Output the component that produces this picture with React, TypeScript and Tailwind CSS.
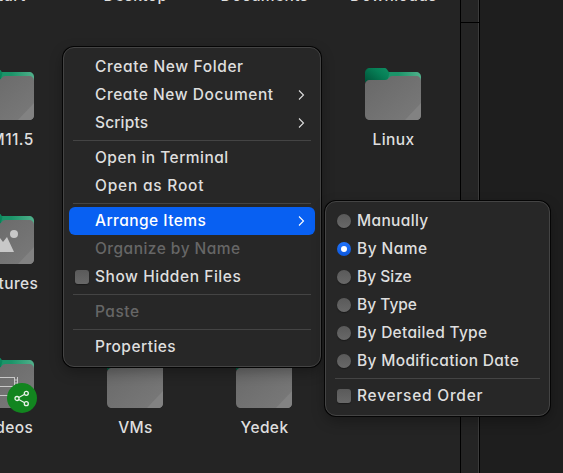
import { ReactNode } from 'react';

type FolderProps = {
  name: string;
  place: string;
  tracking?: string;
  shared?: boolean;
  children?: ReactNode;
};

function Folder({ name, place, tracking = 'tracking-[0.4px]', shared, children }: FolderProps) {
  return (
    <div className={`flex flex-col items-center ${place}`}>
      <div className="relative">
        <svg width="56" height="52" viewBox="0 0 56 52" className="block">
          <defs>
            <linearGradient id="tab" x1="0" y1="1" x2="1" y2="0.300">
              <stop offset="0" stopColor="#005238" />
              <stop offset="0.7" stopColor="#067f56" />
              <stop offset="1" stopColor="#0d8a5f" />
            </linearGradient>
            <linearGradient id="back" x1="0.4" y1="0" x2="1" y2="0">
              <stop offset="0" stopColor="#1b9469" />
              <stop offset="1" stopColor="#51b08b" />
            </linearGradient>
            <linearGradient id="front" x1="0" y1="0" x2="1" y2="1">
              <stop offset="0" stopColor="#686868" />
              <stop offset="1" stopColor="#7a7a7a" />
            </linearGradient>
          </defs>
          <path d="M18 4h33c3 0 5 2 5 5v6H18z" fill="url(#back)" />
          <path
            d="M5 0h14c1.500 0 2.300.4 3 1.400l2.500 3.600-2.500 9H0V5c0-3 2-5 5-5z"
            fill="url(#tab)"
          />
          <path
            d="M5 12h15c2 0 2.700-.7 3.700-2 1-1.300 1.800-2 3.800-2H51c3 0 5 2 5 5v34c0 3-2 5-5 5H5c-3 0-5-2-5-5V17c0-3 2-5 5-5z"
            fill="url(#front)"
          />
          <path d="M56 35v12c0 3-2 5-5 5H40z" fill="#828282" />
          {children}
        </svg>
        {shared && (
          <span className="absolute left-[29px] top-[27px] flex h-[30px] w-[30px] items-center justify-center rounded-full bg-[#12851f]">
            <svg width="16" height="17" viewBox="0 0 16 17" fill="none" stroke="#e8f3e9">
              <path d="M4.800 7.500l5.400-3M4.800 9.500l5.400 3" strokeWidth="1.200" />
              <circle cx="3" cy="8.500" r="2" strokeWidth="1.300" />
              <circle cx="12.300" cy="3.300" r="2" strokeWidth="1.300" />
              <circle cx="12.300" cy="13.700" r="2" strokeWidth="1.300" />
            </svg>
          </span>
        )}
      </div>
      <span className={`mt-2 whitespace-nowrap pl-0.5 leading-6 ${tracking}`}>{name}</span>
    </div>
  );
}

type ItemProps = {
  label: string;
  tracking?: string;
  control?: 'check' | 'radio' | 'radio-on';
  submenu?: boolean;
  active?: boolean;
  disabled?: boolean;
};

function Item({ label, tracking = '', control, submenu, active, disabled }: ItemProps) {
  return (
    <div
      className={`flex h-7 items-center rounded-[6px] pl-1.5 pr-[10px] ${
        active ? 'bg-[#0860f2] text-white' : ''
      } ${disabled ? 'text-[#666666]' : ''}`}
    >
      <span className="flex w-5 shrink-0">
        {control === 'check' && (
          <span className="h-3.5 w-3.5 rounded-[3px] bg-linear-to-b from-[#5a5a5a] to-[#686868] shadow-[0_1px_1px_#1a1a1a]" />
        )}
        {control === 'radio' && (
          <span className="h-3.5 w-3.5 rounded-full bg-linear-to-b from-[#5a5a5a] to-[#686868] shadow-[0_1px_1px_#1a1a1a]" />
        )}
        {control === 'radio-on' && (
          <span className="flex h-3.5 w-3.5 items-center justify-center rounded-full bg-linear-to-b from-[#2174fb] to-[#0b57dd]">
            <span className="h-1.5 w-1.5 rounded-full bg-white" />
          </span>
        )}
      </span>
      <span className={`grow whitespace-nowrap ${tracking}`}>{label}</span>
      {submenu && (
        <svg width="7" height="12" viewBox="0 0 7 12" fill="none" stroke="currentColor" strokeWidth="1.100">
          <path d="M1 1.500l4.500 4.500L1 10.500" />
        </svg>
      )}
    </div>
  );
}

function Separator() {
  return <hr className="mx-1 my-[3px] border-t border-[#444444]" />;
}

function Menu({ place, children }: { place: string; children: ReactNode }) {
  return (
    <div
      className={`absolute rounded-[11px] border border-[#444444] bg-[#272727] p-[5px] shadow-[0_0_0_1px_#050505,0_5px_14px_rgba(0,0,0,0.3)] ${place}`}
    >
      {children}
    </div>
  );
}

export default function App() {
  return (
    <div className="relative flex h-[473px] w-[563px] overflow-hidden bg-[#1e1e1e] font-['Inter','Noto_Sans',sans-serif] text-[15.500px] font-[450] text-[#dedede] [font-feature-settings:'cv11']">
      <main className="h-full w-[460px] shrink-0 overflow-hidden bg-[#242424]">
        <div className="-ml-[59px] -mt-[76px] grid grid-cols-[repeat(4,129px)] auto-rows-[144px]">
          <Folder name="Start" place="col-start-1 row-start-1" />
          <Folder name="Desktop" place="col-start-2 row-start-1" />
          <Folder name="Documents" place="col-start-3 row-start-1" />
          <Folder name="Downloads" place="col-start-4 row-start-1" />
          <Folder name="VM11.5" place="col-start-1 row-start-2" />
          <Folder name="Linux" place="col-start-4 row-start-2" />
          <Folder name="Pictures" place="col-start-1 row-start-3">
            <circle cx="36" cy="22" r="4" fill="#c8c8c8" />
            <path d="M12 40l10-14 3 4 4-5 7 15z" fill="#c8c8c8" />
          </Folder>
          <Folder name="Videos" place="col-start-1 row-start-4" shared>
            <path
              d="M14 21.500h22M14 30.500h22M14 39.500h20M36.500 21v14M39.500 21v14M36.500 24h3M36.500 27h3M36.500 30h3"
              stroke="#c8c8c8"
              fill="none"
            />
          </Folder>
          <Folder name="VMs" place="col-start-2 row-start-4" />
          <Folder name="Yedek" place="col-start-3 row-start-4" />
        </div>
      </main>
      <aside className="flex h-full w-5 shrink-0 flex-col border-x border-black">
        <div className="h-[22px] border-r border-[#3c3c3c] bg-[#242424]" />
        <div className="h-px bg-black" />
        <div className="grow border-r border-[#3c3c3c] bg-[#242424]" />
      </aside>

      <Menu place="left-[63px] top-[47px] w-[258px]">
        <Item label="Create New Folder" tracking="tracking-[0.62px]" />
        <Item label="Create New Document" tracking="tracking-[0.56px]" submenu />
        <Item label="Scripts" tracking="tracking-[0.15px]" submenu />
        <Separator />
        <Item label="Open in Terminal" tracking="tracking-[0.48px]" />
        <Item label="Open as Root" tracking="tracking-[0.78px]" />
        <Separator />
        <Item label="Arrange Items" tracking="tracking-[0.45px]" submenu active />
        <Item label="Organize by Name" tracking="tracking-[0.47px]" disabled />
        <Item label="Show Hidden Files" tracking="tracking-[0.55px]" control="check" />
        <Separator />
        <Item label="Paste" tracking="tracking-[0.5px]" disabled />
        <Separator />
        <Item label="Properties" tracking="tracking-[0.45px]" />
      </Menu>

      <Menu place="left-[325px] top-[201px] w-[225px]">
        <Item label="Manually" tracking="tracking-[0.35px]" control="radio" />
        <Item label="By Name" tracking="tracking-[0.45px]" control="radio-on" />
        <Item label="By Size" control="radio" />
        <Item label="By Type" control="radio" />
        <Item label="By Detailed Type" tracking="tracking-[0.3px]" control="radio" />
        <Item label="By Modification Date" tracking="tracking-[0.33px]" control="radio" />
        <Separator />
        <Item label="Reversed Order" tracking="tracking-[0.75px]" control="check" />
      </Menu>
    </div>
  );
}
